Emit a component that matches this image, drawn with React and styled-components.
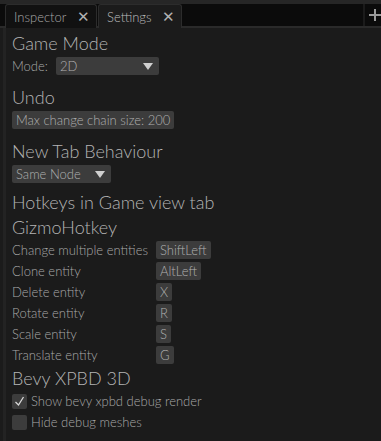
import React, { useState } from "react";
import styled, { createGlobalStyle } from "styled-components";

const Global = createGlobalStyle`
  html, body {
    margin: 0;
    padding: 0;
    background: #1b1b1b;
  }
  body {
    font-family: Lato, "Open Sans", sans-serif;
    font-weight: 300;
    color: #a8a8a8;
  }
`;

const Window = styled.div`
  width: 381px;
  height: 441px;
  overflow: hidden;
  display: flex;
  flex-direction: column;
  background: #1b1b1b;
`;

const TopStrip = styled.div`
  height: 4px;
  background: #262626;
`;

const TabBar = styled.div`
  height: 22px;
  background: #0b0b0b;
  display: flex;
  align-items: flex-end;
  padding-left: 5px;
  border-bottom: 2px solid #2a2a2a;
`;

const Tab = styled.div`
  height: 22px;
  box-sizing: border-box;
  width: ${(p) => p.w}px;
  display: flex;
  align-items: center;
  justify-content: space-between;
  padding: 0 6px 0 8px;
  font-size: 13px;
  color: ${(p) => (p.active ? "#bcbcbc" : "#a8a8a8")};
  background: ${(p) => (p.active ? "#1b1b1b" : "#111111")};
  border: 1px solid #2c2c2c;
  border-bottom: none;
  border-radius: 3px 3px 0 0;
  margin-right: 1px;
  margin-bottom: -2px;
  height: 24px;
`;

const Close = styled.span`
  font-size: 15px;
  color: #b0b0b0;
`;

const Spacer = styled.div`
  flex: 1;
`;

const PlusButton = styled.div`
  width: 16px;
  align-self: stretch;
  border-left: 2px solid #1b1b1b;
  display: flex;
  align-items: center;
  justify-content: flex-end;
  color: #9a9a9a;
`;

const Body = styled.div`
  flex: 1;
  display: flex;
`;

const Gutter = styled.div`
  width: 3px;
  margin-left: 3px;
  background: #232323;
`;

const Content = styled.div`
  flex: 1;
  padding: 4px 0 0 6px;
  display: flex;
  flex-direction: column;
  gap: 3px;
`;

const Heading = styled.div`
  font-size: 18px;
  line-height: 22px;
  color: #b4b4b4;
  margin-top: ${(p) => p.gap || 0}px;
`;

const Row = styled.div`
  display: flex;
  align-items: center;
  gap: 8px;
  height: 18px;
  font-size: 13px;
`;

const Pill = styled.div`
  height: 18px;
  box-sizing: border-box;
  padding: 0 4px;
  display: flex;
  align-items: center;
  justify-content: space-between;
  background: #3c3c3c;
  border-radius: 2px;
  font-size: 13px;
  color: #b0b0b0;
  width: ${(p) => (p.w ? p.w + "px" : "auto")};
`;

const Arrow = styled.span`
  width: 0;
  height: 0;
  border-left: 5px solid transparent;
  border-right: 5px solid transparent;
  border-top: 7px solid #d0d0d0;
  margin-right: 2px;
`;

const KeyGrid = styled.div`
  display: grid;
  grid-template-columns: auto 1fr;
  column-gap: 8px;
  row-gap: 3px;
  align-items: center;
  font-size: 13px;
  justify-items: start;
`;

const CheckRow = styled.label`
  display: flex;
  align-items: center;
  gap: 4px;
  height: 18px;
  font-size: 13px;
`;

const Box = styled.span`
  width: 15px;
  height: 15px;
  background: #3c3c3c;
  border-radius: 2px;
  display: flex;
  align-items: center;
  justify-content: center;
`;

const hotkeys = [
  ["Change multiple entities", "ShiftLeft"],
  ["Clone entity", "AltLeft"],
  ["Delete entity", "X"],
  ["Rotate entity", "R"],
  ["Scale entity", "S"],
  ["Translate entity", "G"],
];

export default function App() {
  const [show, setShow] = useState(true);
  const [hide, setHide] = useState(false);

  return (
    <Window>
      <Global />
      <TopStrip />
      <TabBar>
        <Tab w={92}>
          Inspector <Close>✕</Close>
        </Tab>
        <Tab w={84} active>
          Settings <Close>✕</Close>
        </Tab>
        <Spacer />
        <PlusButton>
          <svg width="12" height="12" viewBox="0 0 12 12">
            <path d="M6 0v12M0 6h12" stroke="#9a9a9a" strokeWidth="2" />
          </svg>
        </PlusButton>
      </TabBar>
      <Body>
        <Gutter />
        <Content>
          <Heading>Game Mode</Heading>
          <Row>
            Mode:
            <Pill w={103}>
              2D <Arrow />
            </Pill>
          </Row>
          <Heading gap={8}>Undo</Heading>
          <Row>
            <Pill>Max change chain size: 200</Pill>
          </Row>
          <Heading gap={8}>New Tab Behaviour</Heading>
          <Row>
            <Pill w={99}>
              Same Node <Arrow />
            </Pill>
          </Row>
          <Heading gap={5}>Hotkeys in Game view tab</Heading>
          <Heading>GizmoHotkey</Heading>
          <KeyGrid>
            {hotkeys.map(([label, key]) => (
              <React.Fragment key={label}>
                <span>{label}</span>
                <Pill>{key}</Pill>
              </React.Fragment>
            ))}
          </KeyGrid>
          <Heading>Bevy XPBD 3D</Heading>
          <CheckRow onClick={() => setShow(!show)}>
            <Box>
              {show && (
                <svg width="11" height="11" viewBox="0 0 11 11">
                  <path d="M1.5 6l3 3 5-8" fill="none" stroke="#d8d8d8" strokeWidth="1.3" />
                </svg>
              )}
            </Box>
            Show bevy xpbd debug render
          </CheckRow>
          <CheckRow onClick={() => setHide(!hide)}>
            <Box>
              {hide && (
                <svg width="11" height="11" viewBox="0 0 11 11">
                  <path d="M1.5 6l3 3 5-8" fill="none" stroke="#d8d8d8" strokeWidth="1.3" />
                </svg>
              )}
            </Box>
            Hide debug meshes
          </CheckRow>
        </Content>
      </Body>
    </Window>
  );
}
